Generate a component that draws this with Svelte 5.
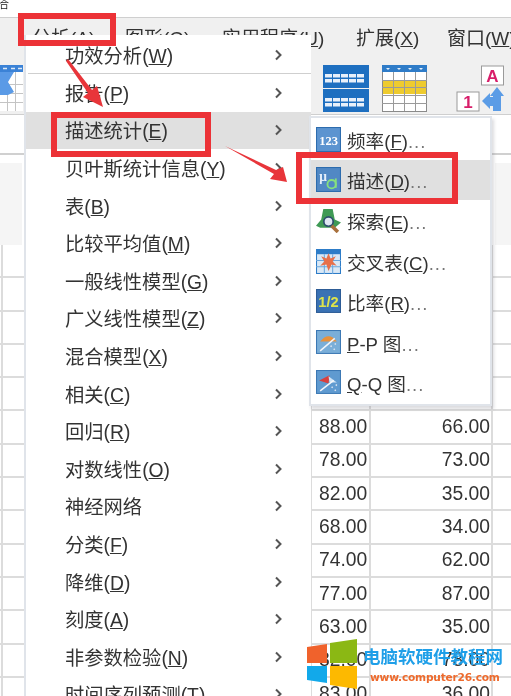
<script>
	const cjk = '"Liberation Sans", "Noto Sans CJK SC", sans-serif';

	const menuItems = [
		["功效分析", "W"], ["报告", "P"], ["描述统计", "E"], ["贝叶斯统计信息", "Y"], ["表", "B"],
		["比较平均值", "M"], ["一般线性模型", "G"], ["广义线性模型", "Z"], ["混合模型", "X"],
		["相关", "C"], ["回归", "R"], ["对数线性", "O"], ["神经网络", ""], ["分类", "F"],
		["降维", "D"], ["刻度", "A"], ["非参数检验", "N"], ["时间序列预测", "T"]
	];

	const subItems = [
		{ icon: "freq", label: "频率", key: "F" },
		{ icon: "desc", label: "描述", key: "D", active: true },
		{ icon: "explore", label: "探索", key: "E" },
		{ icon: "cross", label: "交叉表", key: "C" },
		{ icon: "ratio", label: "比率", key: "R" },
		{ icon: "pp", label: "图", plot: "P" },
		{ icon: "qq", label: "图", plot: "Q" }
	];

	// rows of the data view, the first five are hidden behind the submenu
	const rows = [
		["", ""], ["", ""], ["", ""], ["", ""], ["", ""],
		["88.00", "66.00"], ["78.00", "73.00"], ["82.00", "35.00"], ["68.00", "34.00"],
		["74.00", "62.00"], ["77.00", "87.00"], ["63.00", "35.00"], ["82.00", "78.00"], ["83.00", "36.00"]
	];

	const topMenus = [
		{ label: "分析", key: "A", w: 93 },
		{ label: "图形", key: "G", w: 97 },
		{ label: "实用程序", key: "U", w: 134 },
		{ label: "扩展", key: "X", w: 91 },
		{ label: "窗口", key: "W", w: 64 }
	];
</script>

<div class="page" style="font-family: {cjk}">
	<div class="titlebar"><span class="title-glyph">合</span></div>

	<div class="menubar">
		{#each topMenus as m}
			<span class="top-item" style="width: {m.w}px">{m.label}(<u>{m.key}</u>)</span>
		{/each}
	</div>

	<div class="toolbar">
		<svg class="tool-left" width="23" height="46" viewBox="0 0 23 46">
			<rect x="0" y="0" width="23" height="46" fill="#fff" />
			<rect x="0" y="0" width="23" height="7" fill="#3b82d6" />
			<path d="M3 3.5H7M11 3.5H15M18 3.5H22" stroke="#dce9f8" stroke-width="1.5" />
			<g stroke="#c4c4c4" fill="none">
				<path d="M0 19.5H23M0 28.5H23M0 37.5H23M7.5 7V46M15.5 7V46" />
			</g>
			<path d="M0 7H14L8 17L14 27L8 30H0Z" fill="#5a9ae6" />
		</svg>
		<div class="tool-right">
			<svg width="46" height="47" viewBox="0 0 46 47">
				<rect x="0" y="0" width="46" height="23" fill="#1e6fc0" />
				<rect x="0" y="24" width="46" height="23" fill="#1e6fc0" />
				<g fill="#e8f0fa">
					{#each [9, 14, 33, 38] as y}
						{#each [2, 10, 18, 26, 34] as x}
							<rect {x} {y} width="7" height="3.5" />
						{/each}
					{/each}
				</g>
			</svg>
			<svg width="45" height="47" viewBox="0 0 45 47">
				<rect x="0.5" y="0.5" width="44" height="46" fill="#fff" stroke="#8a8a8a" />
				<rect x="0" y="0" width="45" height="7" fill="#2f7cc8" />
				<rect x="1" y="15" width="43" height="14" fill="#eecb2e" />
				<g stroke="#9a9a9a" fill="none">
					<path d="M11.5 7V46M22.5 7V46M33.5 7V46M0 15.5H45M0 22.5H45M0 30.5H45M0 38.5H45" />
				</g>
				<g fill="#e6f0fa">
					<path d="M4 3H8L6 5ZM15 3H19L17 5ZM26 3H30L28 5ZM37 3H41L39 5Z" />
				</g>
			</svg>
			<svg class="tool-az" width="50" height="48" viewBox="0 0 50 48">
				<rect x="26.5" y="1" width="22" height="19" fill="#fff" stroke="#9a9a9a" />
				<text x="37.5" y="17" text-anchor="middle" class="az-letter" font-size="17">A</text>
				<rect x="2" y="27" width="22" height="19" fill="#fff" stroke="#9a9a9a" />
				<text x="13" y="43" text-anchor="middle" class="az-letter" font-size="17">1</text>
				<path d="M42 22L49 31H46V46H38V41H35V44L27 36L35 28V32H38V31H35Z" fill="#5b9ce6" />
			</svg>
		</div>
	</div>

	<div class="blank"></div>

	<div class="header-row">
		<div class="header-left"></div>
		<div class="header-right"></div>
	</div>

	<div class="sheet">
		{#each rows as r}
			<div class="cell"></div>
			<div class="cell"></div>
			<div class="cell num-a">{r[0]}</div>
			<div class="cell num-b">{r[1]}</div>
			<div class="cell last"></div>
		{/each}
	</div>

	<!-- popup menus lie over the data view -->
	<div class="menu">
		{#each menuItems as item, i}
			<div class="menu-row" class:hover={i === 2} class:sep={i === 0}>
				<span class="menu-label">{item[0]}{#if item[1]}(<u>{item[1]}</u>){/if}</span>
				<svg class="chev" width="9" height="12" viewBox="0 0 9 12">
					<path d="M2 1.5L6.5 6L2 10.5" fill="none" stroke="#555" stroke-width="2" />
				</svg>
			</div>
		{/each}
	</div>

	<div class="submenu">
		{#each subItems as s}
			<div class="sub-row" class:hover={s.active}>
				<svg class="sub-icon" width="25" height="25" viewBox="0 0 24 24">
					{#if s.icon === "freq"}
						<rect x="0.5" y="0.5" width="23" height="23" fill="#5c94d0" stroke="#2d6cae" />
						<text x="12" y="17" text-anchor="middle" class="ico-text" font-size="12" fill="#fff">123</text>
					{:else if s.icon === "desc"}
						<rect x="0.5" y="0.5" width="23" height="23" fill="#5188c4" stroke="#2d6cae" />
						<text x="3" y="13" class="ico-text" font-size="13" fill="#e6effa">μ</text>
						<circle cx="15" cy="16.5" r="4" fill="none" stroke="#86e07e" stroke-width="1.8" />
						<path d="M19 11V20" stroke="#86e07e" stroke-width="1.8" />
					{:else if s.icon === "explore"}
						<path d="M0 17L5 11L7 1H16L18 11L24 14L18 19H4Z" fill="#3f9a55" />
						<circle cx="12" cy="13" r="4.5" fill="#dfe7f2" stroke="#2c4c6c" stroke-width="1.6" />
						<path d="M15 17L21 23" stroke="#a8703c" stroke-width="3.4" />
					{:else if s.icon === "cross"}
						<rect x="0.5" y="0.5" width="23" height="23" fill="#d9e8f6" stroke="#2d7cc8" />
						<rect x="0" y="0" width="24" height="5" fill="#2d7cc8" />
						<path d="M0 11H24M0 17H24M8 5V24M16 5V24" stroke="#6aa6dc" fill="none" />
						<path d="M12 4L14 9L19 7L16 12L20 16L15 15L12 21L10 15L4 16L8 12L5 7L10 9Z" fill="#e8704a" />
					{:else if s.icon === "ratio"}
						<rect x="0.5" y="0.5" width="23" height="22" fill="#3a72b4" stroke="#2d5c96" />
						<text x="12" y="17.5" text-anchor="middle" class="ico-ratio" font-size="14" fill="#dfe44a">1/2</text>
					{:else if s.icon === "pp"}
						<rect x="0.5" y="0.5" width="23" height="22" fill="#7aaed8" stroke="#3c78b4" />
						<path d="M4 11Q12 1 20 11Z" fill="#e8913c" />
						<path d="M4 20L18 8" stroke="#f4f6fa" stroke-width="1.4" />
						<path d="M14 15L15 16M18 13L19 14M17 18L18 19" stroke="#dfe7f2" stroke-width="1.4" />
					{:else}
						<rect x="0.5" y="0.5" width="23" height="22" fill="#5f9ad0" stroke="#3c78b4" />
						<path d="M3 10L13 5L12 13Z" fill="#d8403e" />
						<path d="M12 6L20 12L13 12Z" fill="#cfe4f6" />
						<path d="M4 20L17 10" stroke="#f4f6fa" stroke-width="1.4" />
						<path d="M15 16L16 17M19 14L20 15M18 19L19 20" stroke="#dfe7f2" stroke-width="1.4" />
					{/if}
				</svg>
				<span class="sub-label">
					{#if s.plot}<u>{s.plot}</u>-{s.plot} {s.label}{:else}{s.label}(<u>{s.key}</u>){/if}<span class="dots">...</span>
				</span>
			</div>
		{/each}
	</div>

	<!-- red annotation marks from the tutorial -->
	<div class="mark mark-a"></div>
	<div class="mark mark-b"></div>
	<div class="mark mark-c"></div>
	<svg class="arrows" width="511" height="696" viewBox="0 0 511 696">
		<path d="M68 59L92 90L97 86L103 107L83 97L88 93L66 61Z" fill="#e8353a" />
		<path d="M225 146L276 170L283 167L287 182L270 179L274 174Z" fill="#e8353a" />
	</svg>

	<div class="watermark">
		<svg class="win-logo" width="51" height="50" viewBox="0 0 51 50">
			<path d="M0 8L20 5V24H0Z" fill="#f0622c" />
			<path d="M23 4L50 0V24H23Z" fill="#8bb814" />
			<path d="M0 27H20V44L0 41Z" fill="#12a9ea" />
			<path d="M23 27H50V50L23 46Z" fill="#fdb900" />
		</svg>
		<div class="wm-text">
			<div class="wm-title">电脑软硬件教程网</div>
			<div class="wm-url">www.computer26.com</div>
		</div>
	</div>
</div>

<style>
	:global(body) {
		margin: 0;
		background: #fff;
		overflow: hidden;
	}
	.page {
		position: relative;
		width: 511px;
		height: 696px;
		overflow: hidden;
		color: #333;
		filter: blur(0.35px);
	}
	.titlebar {
		height: 18px;
		border-bottom: 1px solid #cfcfcf;
		box-sizing: border-box;
		background: #fff;
	}
	.title-glyph {
		display: block;
		font-size: 10px;
		line-height: 9px;
		margin-left: -1px;
		color: #222;
	}
	.menubar {
		height: 37px;
		background: #f0f0f0;
		display: flex;
		align-items: center;
		padding-left: 32px;
		box-sizing: border-box;
		font-size: 19px;
		color: #333;
		white-space: nowrap;
	}
	.top-item {
		flex: none;
	}
	.toolbar {
		height: 60px;
		background: #f0f0f0;
		border-bottom: 1px solid #cfcfcf;
		box-sizing: border-box;
		display: flex;
		justify-content: space-between;
		padding-top: 10px;
	}
	.tool-right {
		display: flex;
		gap: 13px;
		margin-right: 6px;
		align-items: flex-start;
	}
	.tool-az {
		margin-left: 15px;
	}
	.az-letter {
		font-family: "Liberation Sans", sans-serif;
		font-weight: 700;
		fill: #d81e6a;
	}
	.blank {
		height: 40px;
		background: #fff;
		border-bottom: 2px solid #d0d0d0;
		box-sizing: border-box;
	}
	.header-row {
		height: 90px;
		display: flex;
		justify-content: space-between;
		background: #fff;
		padding-top: 8px;
		box-sizing: border-box;
	}
	.header-left {
		width: 22px;
		background: #f5f5f5;
	}
	.header-right {
		width: 16px;
		background: #f5f5f5;
	}
	.sheet {
		display: grid;
		grid-template-columns: 3px 309px 59px 122px 18px;
		grid-auto-rows: 33.3px;
		font-size: 19.3px;
		color: #333;
		background: #fff;
	}
	.cell {
		border-bottom: 2px solid #dcdcdc;
		border-right: 2px solid #dcdcdc;
		box-sizing: border-box;
		display: flex;
		align-items: center;
	}
	.num-a {
		padding-left: 7px;
	}
	.num-b {
		justify-content: flex-end;
		padding-right: 1px;
	}
	.last {
		border-right: none;
	}
	.menu {
		position: absolute;
		left: 24px;
		top: 35px;
		width: 287px;
		height: 680px;
		padding-top: 1.5px;
		background: #fff;
		border-left: 2px solid #e0e4ea;
		box-sizing: border-box;
		font-size: 19.3px;
		color: #333;
	}
	.menu-row {
		height: 37.6px;
		display: flex;
		align-items: center;
		justify-content: space-between;
		padding: 0 28px 0 39px;
		box-sizing: border-box;
		position: relative;
		white-space: nowrap;
	}
	.menu-row.hover {
		background: #e0e0e0;
	}
	.menu-row.sep::after {
		content: "";
		position: absolute;
		left: 2px;
		right: 0;
		bottom: 0;
		height: 1px;
		background: #cfcfcf;
	}
	.submenu {
		position: absolute;
		left: 309px;
		top: 116px;
		width: 183px;
		height: 290px;
		background: #fff;
		border: 2px solid #e0e4ea;
		box-sizing: border-box;
		box-shadow: 2px 3px 3px rgba(120, 120, 130, 0.25);
		padding-top: 1px;
	}
	.sub-row {
		height: 40.6px;
		display: flex;
		align-items: center;
		gap: 6px;
		padding-left: 5px;
		box-sizing: border-box;
		font-size: 18.6px;
		color: #333;
		white-space: nowrap;
	}
	.sub-row.hover {
		background: #e0e0e0;
	}
	.sub-icon {
		flex: none;
	}
	.sub-label {
		display: block;
	}
	.dots {
		color: #777;
		letter-spacing: 1px;
	}
	.ico-text {
		font-family: "Liberation Serif", serif;
		font-weight: 700;
	}
	.ico-ratio {
		font-family: "Liberation Sans", sans-serif;
		font-weight: 700;
	}
	.mark {
		position: absolute;
		border: 6.5px solid #ec3237;
		box-sizing: border-box;
	}
	.mark-a {
		left: 18px;
		top: 13px;
		width: 98px;
		height: 33px;
	}
	.mark-b {
		left: 51px;
		top: 112px;
		width: 160px;
		height: 45px;
	}
	.mark-c {
		left: 296px;
		top: 152px;
		width: 162px;
		height: 52px;
	}
	.arrows {
		position: absolute;
		left: 0;
		top: 0;
		pointer-events: none;
	}
	.watermark {
		position: absolute;
		left: 307px;
		top: 639px;
		display: flex;
		gap: 5px;
	}
	.wm-text {
		padding-top: 7px;
		white-space: nowrap;
	}
	.wm-title {
		font-size: 17.5px;
		line-height: 22px;
		font-weight: 700;
		color: #1f9fe8;
	}
	.wm-url {
		font-size: 10.6px;
		line-height: 18px;
		font-weight: 700;
		color: #ee6a2c;
		margin-left: 7px;
		font-family: "DejaVu Sans", sans-serif;
		letter-spacing: -0.2px;
	}
</style>
